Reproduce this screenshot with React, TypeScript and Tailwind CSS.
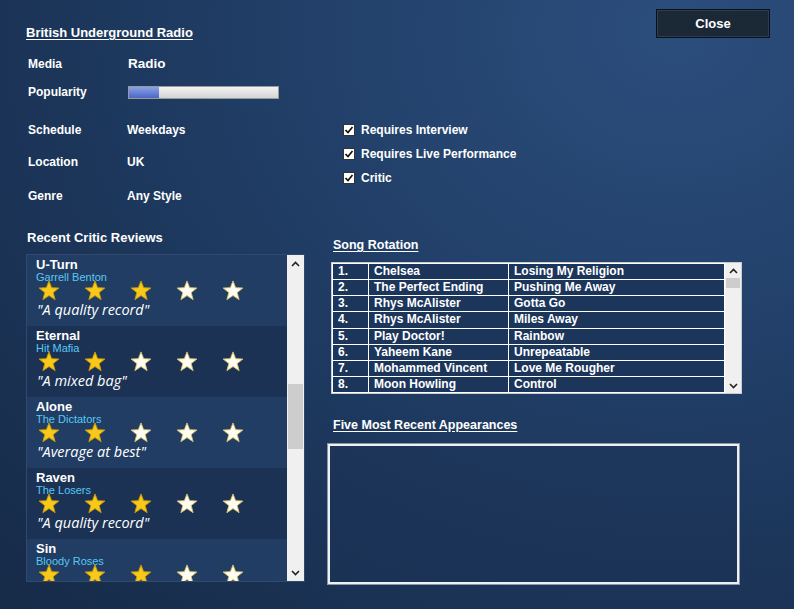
import React from "react";

type Review = { title: string; artist: string; stars: number; quote: string };

const reviews: Review[] = [
  { title: "U-Turn", artist: "Garrell Benton", stars: 3, quote: "\"A quality record\"" },
  { title: "Eternal", artist: "Hit Mafia", stars: 2, quote: "\"A mixed bag\"" },
  { title: "Alone", artist: "The Dictators", stars: 2, quote: "\"Average at best\"" },
  { title: "Raven", artist: "The Losers", stars: 3, quote: "\"A quality record\"" },
  { title: "Sin", artist: "Bloody Roses", stars: 3, quote: "\"A quality record\"" },
];

const songs = [
  ["Chelsea", "Losing My Religion"],
  ["The Perfect Ending", "Pushing Me Away"],
  ["Rhys McAlister", "Gotta Go"],
  ["Rhys McAlister", "Miles Away"],
  ["Play Doctor!", "Rainbow"],
  ["Yaheem Kane", "Unrepeatable"],
  ["Mohammed Vincent", "Love Me Rougher"],
  ["Moon Howling", "Control"],
];

const details = [
  { label: "Schedule", value: "Weekdays", cls: "mt-[18px]" },
  { label: "Location", value: "UK", cls: "mt-[12px]" },
  { label: "Genre", value: "Any Style", cls: "mt-[14px]" },
];

const checks = ["Requires Interview", "Requires Live Performance", "Critic"];

function Star({ filled }: { filled: boolean }) {
  return (
    <svg width="22" height="21" viewBox="0 0 24 23">
      <polygon
        points="12,1 14.9,8.4 22.8,8.8 16.6,13.8 18.7,21.5 12,17.1 5.3,21.5 7.4,13.8 1.2,8.8 9.1,8.4"
        fill={filled ? "#f8c81a" : "#fffdf2"}
        stroke={filled ? "#c99a06" : "#d8c26a"}
        strokeWidth="1"
        strokeLinejoin="round"
      />
    </svg>
  );
}

function Caret({ up }: { up: boolean }) {
  return (
    <svg width="9" height="6" viewBox="0 0 9 6">
      <polyline
        points={up ? "1,5 4.5,1.5 8,5" : "1,1 4.5,4.5 8,1"}
        fill="none"
        stroke="#222"
        strokeWidth="1.6"
      />
    </svg>
  );
}

function Checkbox() {
  return (
    <div className="w-[12px] h-[12px] bg-white border border-[#333] flex items-center justify-center">
      <svg width="10" height="10" viewBox="0 0 10 10">
        <polyline points="1.5,5 4,7.5 8.5,2" fill="none" stroke="#111" strokeWidth="1.7" />
      </svg>
    </div>
  );
}

export default function App() {
  return (
    <div
      className="w-[794px] h-[609px] overflow-hidden flex text-white bg-[radial-gradient(ellipse_at_85%_5%,#2c4e7d_0%,#213f68_40%,#1a3254_75%,#162b48_100%)]"
      style={{ fontFamily: '"Liberation Sans", Arial, sans-serif' }}
    >
      {/* left column */}
      <div className="w-[306px] pl-[26px] pt-[25px] flex flex-col">
        <h1 className="text-[13px] leading-[16px] font-bold underline underline-offset-2">
          British Underground Radio
        </h1>

        <div className="mt-[13px] pl-[2px] h-[20px] flex items-center text-[12px] font-bold">
          <span className="w-[100px]">Media</span>
          <span className="text-[13.5px]">Radio</span>
        </div>
        <div className="mt-[8px] pl-[2px] h-[20px] flex items-center text-[12px] font-bold">
          <span className="w-[100px]">Popularity</span>
          <div className="w-[151px] h-[13px] border border-[#9a9a9a] bg-[linear-gradient(#f2f2f2,#d4d4d4)] flex">
            <div className="w-[30px] h-full bg-[linear-gradient(#8aa2e6,#4a68c6)]" />
          </div>
        </div>

        {details.map((d) => (
          <div key={d.label} className={`${d.cls} pl-[2px] h-[20px] flex items-center text-[12px] font-bold`}>
            <span className="w-[99px]">{d.label}</span>
            <span>{d.value}</span>
          </div>
        ))}

        <h2 className="mt-[24px] pl-[1px] text-[13px] leading-[16px] font-bold">Recent Critic Reviews</h2>

        <div className="mt-[8px] w-[279px] h-[328px] border border-[#30496d] flex">
          <div className="flex-1 overflow-hidden">
            {reviews.map((r, i) => (
              <div
                key={r.title}
                className={`h-[71px] pl-[9px] pt-[2px] ${i % 2 === 0 ? "bg-[#213d63]" : "bg-[#1b3255]"}`}
              >
                <div className="text-[13px] leading-[15px] font-bold">{r.title}</div>
                <div className="text-[11px] leading-[10px] text-[#58c8f4]">{r.artist}</div>
                <div className="flex gap-[24px] pl-[2px] h-[20px] items-center mt-[-2px]">
                  {[0, 1, 2, 3, 4].map((s) => (
                    <Star key={s} filled={s < r.stars} />
                  ))}
                </div>
                <div
                  className="mt-[1px] pl-[1px] text-[14.5px] leading-[18px] italic"
                  style={{ fontFamily: '"Open Sans", sans-serif' }}
                >
                  {r.quote}
                </div>
              </div>
            ))}
          </div>
          <div className="w-[17px] bg-[#f0f0f0] flex flex-col">
            <div className="h-[17px] flex items-center justify-center">
              <Caret up />
            </div>
            <div className="h-[112px]" />
            <div className="h-[65px] bg-[#cdcdcd] mx-[1px]" />
            <div className="flex-1" />
            <div className="h-[17px] flex items-center justify-center">
              <Caret up={false} />
            </div>
          </div>
        </div>
      </div>

      {/* right column */}
      <div className="flex-1 pl-[22px] pt-[9px] flex flex-col">
        <div className="flex justify-end pr-[24px]">
          <button className="w-[114px] h-[29px] bg-[#1b2936] border border-[#0a1119] shadow-[inset_0_0_0_1px_#2c3d4f] text-[13px] font-bold text-white">
            Close
          </button>
        </div>

        <div className="mt-[80px] pl-[15px] flex flex-col">
          {checks.map((c) => (
            <div key={c} className="h-[24px] flex items-center gap-[6px] text-[12px] font-bold">
              <Checkbox />
              <span>{c}</span>
            </div>
          ))}
        </div>

        <h2 className="mt-[47px] pl-[5px] text-[12.5px] leading-[16px] font-bold underline underline-offset-2">
          Song Rotation
        </h2>

        <div className="mt-[9px] ml-[3px] w-[411px] h-[132px] border border-[#c8ccd4] flex">
          <table className="w-[393px] border-collapse text-[12px] font-bold leading-[15px]">
            <tbody>
              {songs.map(([artist, song], i) => (
                <tr key={i} className="h-[16px]">
                  <td className="w-[36px] border border-white bg-[#1c355b] pl-[5px]">{i + 1}.</td>
                  <td className="w-[140px] border border-white bg-[#1c355b] pl-[5px]">{artist}</td>
                  <td className="border border-white bg-[#1c355b] pl-[5px]">{song}</td>
                </tr>
              ))}
            </tbody>
          </table>
          <div className="flex-1 bg-[#f0f0f0] flex flex-col">
            <div className="h-[15px] flex items-center justify-center">
              <Caret up />
            </div>
            <div className="h-[10px] bg-[#cdcdcd] mx-[1px]" />
            <div className="flex-1" />
            <div className="h-[15px] flex items-center justify-center">
              <Caret up={false} />
            </div>
          </div>
        </div>

        <h2 className="mt-[23px] pl-[5px] text-[12.5px] leading-[16px] font-bold underline underline-offset-2">
          Five Most Recent Appearances
        </h2>

        <div className="mt-[11px] w-[411px] h-[140px] border-2 border-[#eef0f4] shadow-[0_0_0_1px_#8a97aa] bg-[#1b3255]/40" />
      </div>
    </div>
  );
}
